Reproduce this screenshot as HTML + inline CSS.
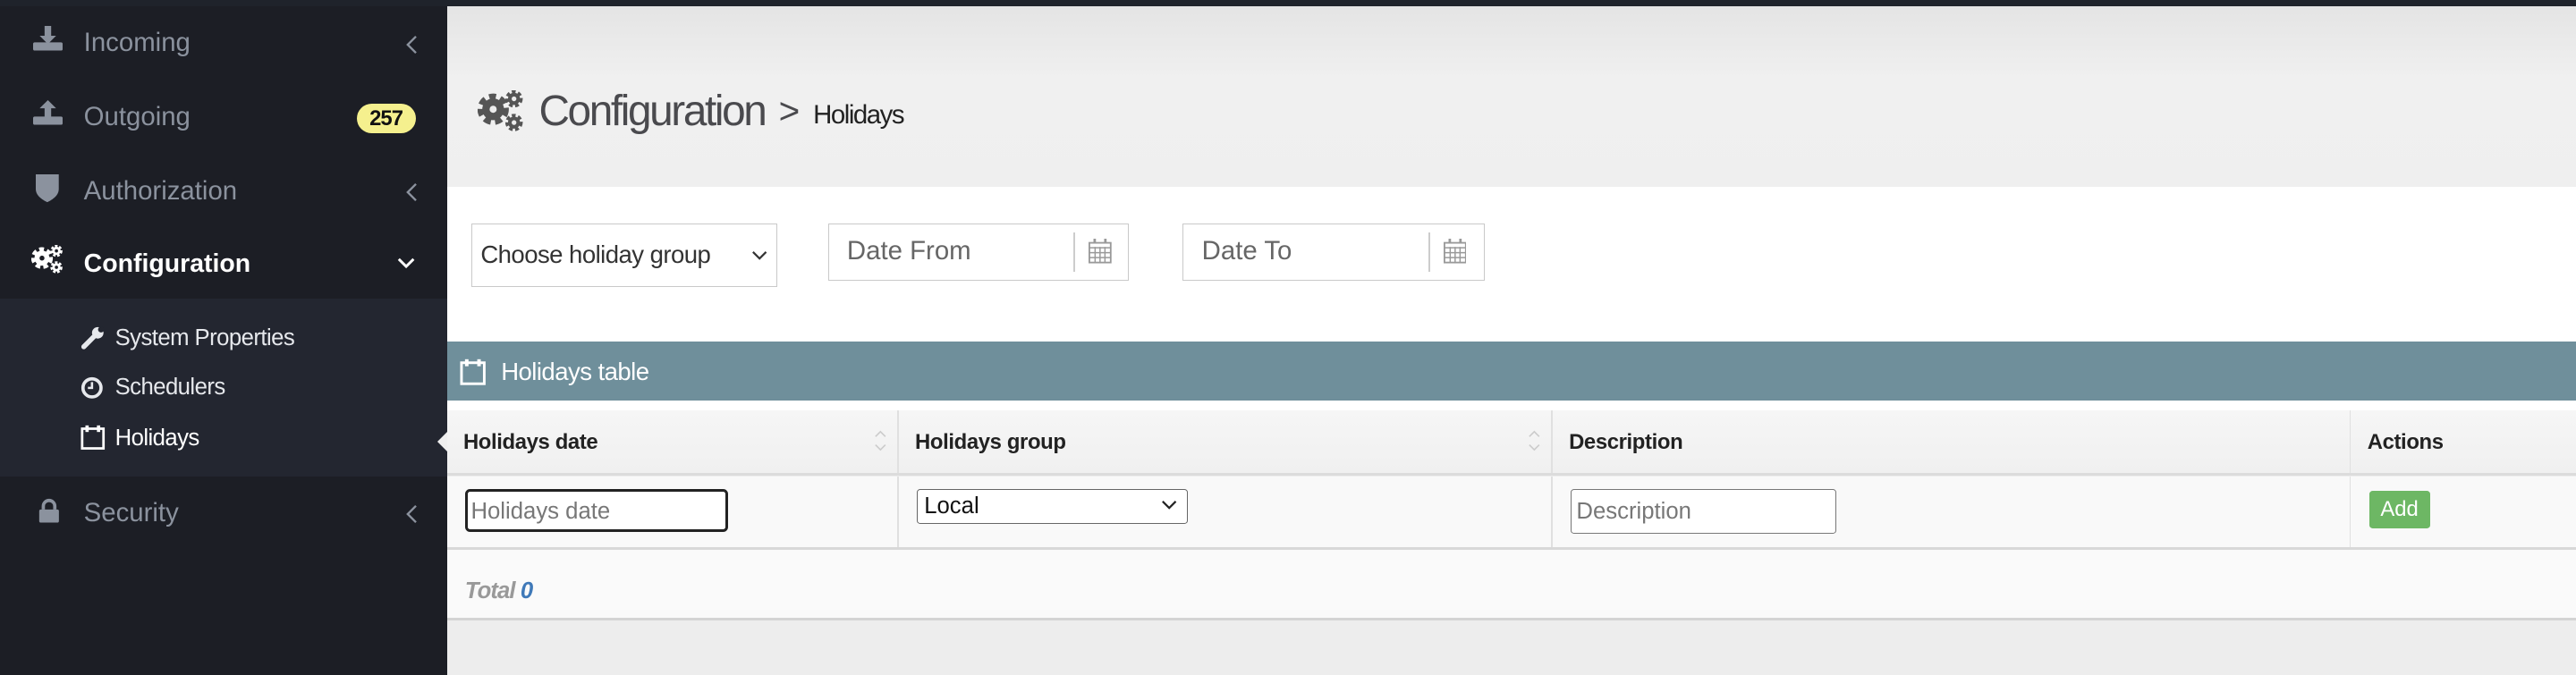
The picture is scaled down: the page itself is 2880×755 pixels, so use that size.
<!DOCTYPE html>
<html><head><meta charset="utf-8">
<style>
html,body{margin:0;padding:0;}
body{width:1568px;height:410.5px;overflow:hidden;zoom:1.83674;font-family:"Liberation Sans",sans-serif;background:#ededed;position:relative;}
.abs{position:absolute;}
#top{left:0;top:0;width:1568px;height:4px;background:#1f232b;}
#side{left:0;top:4px;width:272px;height:407px;background:#1c1e25;}
.mi{position:absolute;left:0;width:272px;height:45px;color:#8b929e;font-size:16px;}
.mi .t{position:absolute;left:51px;top:13px;}
.mi .ic{position:absolute;left:20px;top:13px;}
.mi .ch{position:absolute;left:247px;top:17px;}
#sub{left:0;top:182px;width:272px;height:108px;background:#232630;}
.si{position:absolute;left:70px;color:#e6e8ec;font-size:14px;letter-spacing:-0.3px;}
#main{left:272px;top:4px;width:1296px;height:110px;background:linear-gradient(#e4e4e4,#f0f0f0 40%,#efefef);}
#white{left:272px;top:114px;width:1296px;height:94px;background:#fff;}
.box{position:absolute;border:1px solid #c9c9c9;background:#fff;box-sizing:border-box;font-size:16px;color:#555;}
#bar{left:272px;top:208px;width:1296px;height:36px;background:#6f8f9b;color:#fff;}
#thead{left:272px;top:250px;width:1296px;height:38px;background:linear-gradient(#f6f6f6,#f0f0f0);border-bottom:2px solid #dcdcdc;}
#row{left:272px;top:290px;width:1296px;height:43px;background:#f9f9f9;border-bottom:2px solid #d8d8d8;}
#foot{left:272px;top:335px;width:1296px;height:41px;background:#fafafa;border-bottom:2px solid #d4d4d4;}
.th{position:absolute;top:12px;font-size:13px;font-weight:bold;color:#222;letter-spacing:-0.2px;}
.vl{position:absolute;top:0;width:1px;height:100%;background:#e0e0e0;}
</style></head><body>
<svg width="0" height="0" style="position:absolute">
 <defs>
  <g id="gear">
   <circle cx="0" cy="0" r="3.6" fill="none" stroke="currentColor" stroke-width="2.6" stroke-dasharray="1.9 1.25"/>
   <circle cx="0" cy="0" r="3.4" fill="currentColor"/>
  </g>
  <g id="gears">
   <use href="#gear" transform="translate(6.5,8) scale(1.35)"/>
   <circle cx="6.5" cy="8" r="1.5" fill="var(--bg)"/>
   <use href="#gear" transform="translate(15.3,3.6) scale(0.75)"/>
   <circle cx="15.3" cy="3.6" r="1" fill="var(--bg)"/>
   <use href="#gear" transform="translate(15.3,13.6) scale(0.75)"/>
   <circle cx="15.3" cy="13.6" r="1" fill="var(--bg)"/>
  </g>
  <path id="chev" d="M6 1L1 6l5 5" stroke="#8b929e" stroke-width="1.3" fill="none"/>
  <g id="sort"><path d="M1 4l3-3 3 3M1 9l3 3 3-3" stroke="#ccc" stroke-width="0.9" fill="none"/></g>
 </defs>
</svg>
<div id="top" class="abs"></div>
<div id="side" class="abs"></div>
<div class="mi" style="top:4px">
 <svg class="ic" width="18" height="16" viewBox="0 0 18 16" style="top:12px"><path d="M7 0h4v6h3l-5 5-5-5h3z" fill="#8b929e"/><rect x="0" y="10" width="18" height="5" rx="1" fill="#8b929e"/></svg>
 <span class="t">Incoming</span><svg class="ch" width="7" height="12"><use href="#chev"/></svg></div>
<div class="mi" style="top:49px">
 <svg class="ic" width="18" height="16" viewBox="0 0 18 16" style="top:12px"><path d="M7 11h4V5h3L9 0 4 5h3z" fill="#8b929e"/><rect x="0" y="10" width="18" height="5" rx="1" fill="#8b929e"/></svg>
 <span class="t">Outgoing</span>
 <span style="position:absolute;left:217px;top:14px;width:36px;height:18px;border-radius:9px;background:#f5f08e;color:#111;font-size:13px;font-weight:bold;text-align:center;line-height:18px;letter-spacing:-0.5px">257</span></div>
<div class="mi" style="top:94px">
 <svg class="ic" width="14" height="17" viewBox="0 0 14 17" style="left:22px;top:12px"><path d="M0 0h14v9c0 4-4 6.5-7 8C4 15.5 0 13 0 9z" fill="#8b929e"/></svg>
 <span class="t">Authorization</span><svg class="ch" width="7" height="12"><use href="#chev"/></svg></div>
<div class="mi" style="top:139px;color:#fff;height:43px;">
 <svg class="ic" width="20" height="18" viewBox="0 0 20 18" style="left:19px;top:10px;color:#fff;--bg:#1c1e25"><use href="#gears"/></svg>
 <span class="t" style="font-weight:bold;font-size:15.5px">Configuration</span>
 <svg style="position:absolute;left:242px;top:18px" width="11" height="8" viewBox="0 0 11 8"><path d="M1 1l4.5 4.5L10 1" stroke="#fff" stroke-width="1.6" fill="none"/></svg></div>
<div id="sub" class="abs"></div>
<svg class="abs" style="left:49px;top:198px" width="15" height="15" viewBox="0 0 15 15"><path d="M2 13L8 7" stroke="#e6e8ec" stroke-width="3" stroke-linecap="round"/><circle cx="10.5" cy="4.5" r="3.5" fill="#e6e8ec"/><circle cx="12.5" cy="2.5" r="1.8" fill="#232630"/></svg>
<span class="abs si" style="top:198px">System Properties</span>
<svg class="abs" style="left:49px;top:229px" width="14" height="14" viewBox="0 0 14 14"><circle cx="7" cy="7" r="5.5" fill="none" stroke="#e6e8ec" stroke-width="2"/><path d="M7 3.5V7H4.5" stroke="#e6e8ec" stroke-width="1.4" fill="none"/></svg>
<span class="abs si" style="top:228px">Schedulers</span>
<svg class="abs" style="left:49px;top:258px" width="15" height="16" viewBox="0 0 15 16"><rect x="1" y="3" width="13" height="12" fill="none" stroke="#fff" stroke-width="1.5"/><rect x="3" y="1" width="2" height="4" fill="#fff"/><rect x="10" y="1" width="2" height="4" fill="#fff"/></svg>
<span class="abs si" style="top:259px;color:#fff">Holidays</span>
<div class="abs" style="left:266px;top:263px;width:0;height:0;border-top:6px solid transparent;border-bottom:6px solid transparent;border-right:6px solid #efefef"></div>
<div class="mi" style="top:290px">
 <svg class="ic" width="14" height="16" viewBox="0 0 14 16" style="left:23px;top:13px"><path d="M3.5 7V5a3.5 3.5 0 017 0v2" stroke="#8b929e" stroke-width="2" fill="none"/><rect x="1" y="7" width="12" height="8" rx="1" fill="#8b929e"/></svg>
 <span class="t">Security</span><svg class="ch" width="7" height="12"><use href="#chev"/></svg></div>

<div id="main" class="abs"></div>
<svg class="abs" style="left:291px;top:55px;color:#555;--bg:#ececec" width="29" height="26" viewBox="0 0 20 18"><use href="#gears"/></svg>
<span class="abs" style="left:328px;top:53px;font-size:26px;color:#4a4a4e;letter-spacing:-1.3px">Configuration</span>
<span class="abs" style="left:474px;top:55px;font-size:22px;color:#4a4a4e">&gt;</span>
<span class="abs" style="left:495px;top:61px;font-size:16px;color:#222;letter-spacing:-0.8px">Holidays</span>

<div id="white" class="abs"></div>
<div class="box" style="left:287px;top:136px;width:186px;height:39px;">
 <span style="position:absolute;left:5px;top:10px;color:#333;font-size:15px;letter-spacing:-0.3px">Choose holiday group</span>
 <svg style="position:absolute;left:170px;top:16px" width="10" height="7" viewBox="0 0 10 7"><path d="M1 1l4 4 4-4" stroke="#333" stroke-width="1.2" fill="none"/></svg></div>
<div class="box" style="left:504px;top:136px;width:183px;height:35px;">
 <span style="position:absolute;left:11px;top:7px;color:#666;font-size:16px">Date From</span>
 <div style="position:absolute;left:149px;top:5px;width:1px;height:24px;background:#ccc"></div>
 <svg style="position:absolute;left:158px;top:9px" width="14" height="15" viewBox="0 0 14 15"><rect x="0.5" y="2.5" width="13" height="12" fill="none" stroke="#999"/><path d="M0.5 5.5h13M0.5 8.5h13M0.5 11.5h13M4 5v10M7 5v10M10 5v10" stroke="#999" stroke-width="0.8"/><rect x="3" y="0" width="1.5" height="3" fill="#999"/><rect x="9.5" y="0" width="1.5" height="3" fill="#999"/></svg></div>
<div class="box" style="left:720px;top:136px;width:184px;height:35px;">
 <span style="position:absolute;left:11px;top:7px;color:#666;font-size:16px">Date To</span>
 <div style="position:absolute;left:149px;top:5px;width:1px;height:24px;background:#ccc"></div>
 <svg style="position:absolute;left:158px;top:9px" width="14" height="15" viewBox="0 0 14 15"><rect x="0.5" y="2.5" width="13" height="12" fill="none" stroke="#999"/><path d="M0.5 5.5h13M0.5 8.5h13M0.5 11.5h13M4 5v10M7 5v10M10 5v10" stroke="#999" stroke-width="0.8"/><rect x="3" y="0" width="1.5" height="3" fill="#999"/><rect x="9.5" y="0" width="1.5" height="3" fill="#999"/></svg></div>

<div id="bar" class="abs">
 <svg style="position:absolute;left:8px;top:9px" width="16" height="18" viewBox="0 0 15 16"><rect x="1" y="3" width="13" height="12" fill="none" stroke="#fff" stroke-width="1.5"/><rect x="3" y="1" width="2" height="4" fill="#fff"/><rect x="10" y="1" width="2" height="4" fill="#fff"/></svg>
 <span style="position:absolute;left:33px;top:10px;font-size:15px;letter-spacing:-0.3px">Holidays table</span></div>
<div class="abs" style="left:272px;top:244px;width:1296px;height:6px;background:#fff"></div>

<div id="thead" class="abs">
 <span class="th" style="left:10px">Holidays date</span>
 <svg style="position:absolute;left:260px;top:12px" width="8" height="13"><use href="#sort"/></svg>
 <div class="vl" style="left:274px"></div>
 <span class="th" style="left:285px">Holidays group</span>
 <svg style="position:absolute;left:658px;top:12px" width="8" height="13"><use href="#sort"/></svg>
 <div class="vl" style="left:672px"></div>
 <span class="th" style="left:683px">Description</span>
 <div class="vl" style="left:1158px"></div>
 <span class="th" style="left:1169px">Actions</span></div>
<div id="row" class="abs">
 <div class="vl" style="left:274px"></div><div class="vl" style="left:672px"></div><div class="vl" style="left:1158px"></div>
 <div style="position:absolute;left:11px;top:8px;width:160px;height:26px;border:2px solid #222;border-radius:3px;background:#fff;box-sizing:border-box"><span style="position:absolute;left:2px;top:4px;font-size:14px;color:#777">Holidays date</span></div>
 <div style="position:absolute;left:286px;top:8px;width:165px;height:21px;border:1px solid #666;border-radius:2px;background:#fff;box-sizing:border-box"><span style="position:absolute;left:4px;top:2px;font-size:14px;color:#111">Local</span>
  <svg style="position:absolute;left:148px;top:6px" width="10" height="7" viewBox="0 0 10 7"><path d="M1 1l4 4 4-4" stroke="#222" stroke-width="1.2" fill="none"/></svg></div>
 <div style="position:absolute;left:684px;top:8px;width:162px;height:27px;border:1px solid #777;border-radius:2px;background:#fff;box-sizing:border-box"><span style="position:absolute;left:3px;top:5px;font-size:14px;color:#777">Description</span></div>
 <div style="position:absolute;left:1170px;top:9px;width:37px;height:23px;background:#6db764;border-radius:2px;color:#fff;font-size:13px;text-align:center;line-height:23px">Add</div></div>
<div id="foot" class="abs"><span style="position:absolute;left:11px;top:17px;font-size:14px;font-style:italic;font-weight:bold;color:#999;letter-spacing:-0.5px">Total <span style="color:#3f79b8">0</span></span></div>
</body></html>
